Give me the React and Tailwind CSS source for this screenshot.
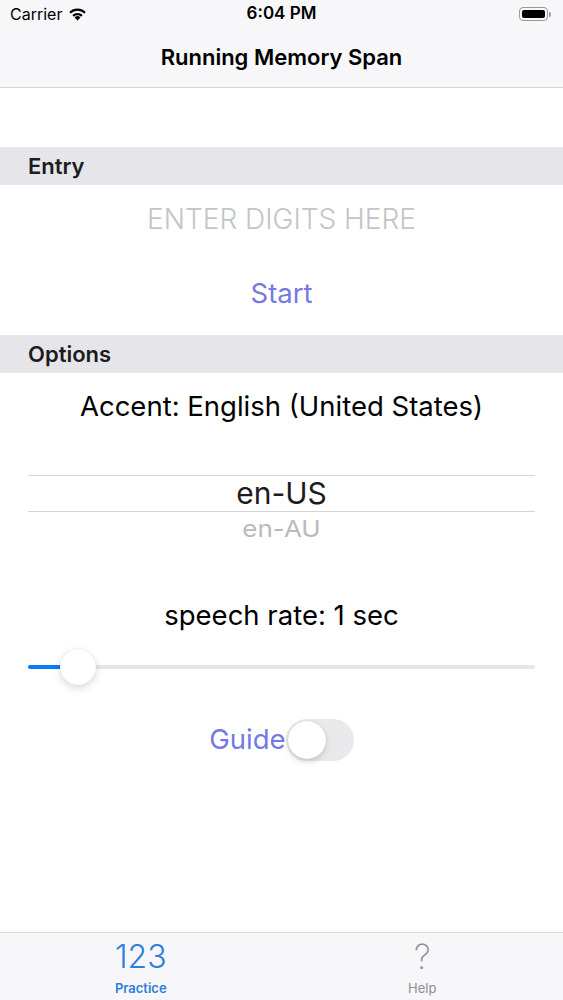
import React from "react";

const font = { fontFamily: "Inter, 'Liberation Sans', sans-serif" };

// status bar wifi glyph
const Wifi = () => (
  <svg width="19" height="14" viewBox="0 0 19 14">
    <path d="M9.5 13.5 L6.6 10.4 A4.2 4.2 0 0 1 12.4 10.4 Z" fill="#000" />
    <path d="M4.3 8.1 A7.4 7.4 0 0 1 14.7 8.1 L13.1 9.8 A5.1 5.1 0 0 0 5.9 9.8 Z" fill="#000" />
    <path d="M1.2 4.9 A11.8 11.8 0 0 1 17.8 4.9 L16.2 6.6 A9.4 9.4 0 0 0 2.8 6.6 Z" fill="#000" />
  </svg>
);

const Battery = () => (
  <div className="flex items-center">
    <div className="w-[29px] h-[14px] rounded-[4px] border border-[#9a9a9a] p-[2px]">
      <div className="w-full h-full rounded-[2px] bg-black" />
    </div>
    <div className="w-[2px] h-[5px] rounded-r-sm bg-[#9a9a9a] ml-[1px]" />
  </div>
);

const SectionHeader = ({ title }) => (
  <div className="h-[38px] bg-[#e6e5ea] flex items-center px-7">
    <span className="text-[22px] font-semibold text-[#1c1c1e]">{title}</span>
  </div>
);

export default function App() {
  return (
    <div className="w-[563px] h-[1000px] bg-white flex flex-col overflow-hidden" style={font}>
      {/* status + navigation bar */}
      <div className="bg-[#f7f6f8] border-b border-[#d4d4d8]">
        <div className="h-[28px] relative flex items-center px-[10px]">
          <div className="flex items-center gap-[6px]">
            <span className="text-[16px] text-black">Carrier</span>
            <Wifi />
          </div>
          <span className="absolute left-0 right-0 text-center text-[17px] font-semibold text-black">6:04 PM</span>
          <div className="ml-auto mr-[2px]">
            <Battery />
          </div>
        </div>
        <div className="h-[59px] flex items-center justify-center">
          <span className="text-[22px] font-semibold text-black">Running Memory Span</span>
        </div>
      </div>

      <div className="flex-1 flex flex-col">
        <div className="h-[59px]" />

        <SectionHeader title="Entry" />
        <div className="h-[150px] flex flex-col items-center">
          <div className="h-[68px] flex items-center text-[28px] font-light text-[#c4c4c8]">ENTER DIGITS HERE</div>
          <div className="h-[82px] flex items-center text-[27.5px] text-[#7479e4]">Start</div>
        </div>

        <SectionHeader title="Options" />
        <div className="flex flex-col items-center">
          <div className="h-[68px] flex items-center text-[27.5px] text-black">Accent: English (United States)</div>

          {/* language picker */}
          <div className="w-full px-7 mt-[34px]">
            <div className="h-[37px] border-y border-[#d3d3d8] flex items-center justify-center text-[30px] text-[#1c1c1e]">en-US</div>
            <div className="h-[32px] flex items-center justify-center text-[26px] text-[#b9b9be] scale-y-90">en-AU</div>
          </div>

          <div className="h-[56px] mt-[44px] flex items-center text-[27.5px] text-black">speech rate: 1 sec</div>

          {/* speech rate slider */}
          <div className="w-full px-7 mt-[5px]">
            <div className="relative h-[36px] flex items-center">
              <div className="w-full h-[4px] rounded-full bg-[#e5e5ea]" />
              <div className="absolute left-0 w-[50px] h-[4px] rounded-full bg-[#0a7af5]" />
              <div className="absolute left-[32px] w-[36px] h-[36px] rounded-full bg-white shadow-[0_3px_8px_rgba(0,0,0,0.15),0_0_1px_rgba(0,0,0,0.15)]" />
            </div>
          </div>

          <div className="flex items-center mt-[34px]">
            <span className="text-[27.5px] text-[#7479e4]">Guide</span>
            <div className="w-[68px] h-[42px] rounded-full bg-[#e9e9ec] p-[2px]">
              <div className="w-[38px] h-[38px] rounded-full bg-white shadow-[0_3px_6px_rgba(0,0,0,0.15),0_0_1px_rgba(0,0,0,0.2)]" />
            </div>
          </div>
        </div>
      </div>

      {/* tab bar */}
      <div className="h-[68px] bg-[#f7f6f8] border-t border-[#dcdce0] grid grid-cols-2">
        <div className="flex flex-col items-center pt-[6px]">
          <span className="text-[32px] leading-[36px] font-light text-[#2d80d9]">123</span>
          <span className="text-[13px] font-semibold text-[#2d80d9] mt-[4px]">Practice</span>
        </div>
        <div className="flex flex-col items-center pt-[6px]">
          <span className="text-[34px] leading-[36px] font-extralight text-[#8e8e93]">?</span>
          <span className="text-[13px] text-[#8e8e93] mt-[4px]">Help</span>
        </div>
      </div>
    </div>
  );
}
